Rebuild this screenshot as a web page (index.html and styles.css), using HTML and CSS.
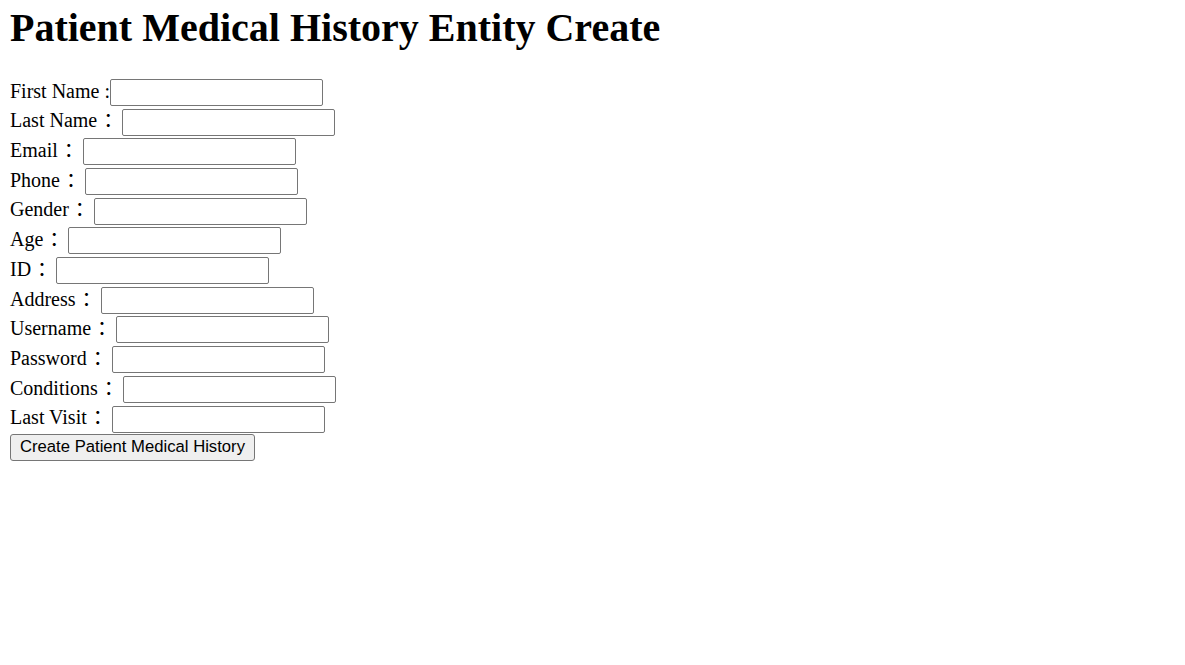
FILE: index.html
```html
<!DOCTYPE html>
<html>
<head>
<meta charset="utf-8">
<title>Patient Medical History Entity Create</title>
<link rel="stylesheet" href="styles.css">
</head>
<body>
<div class="page">
  <h1 class="title">Patient Medical History Entity Create</h1>
  <form class="form">
    <div class="row"><label class="lbl">First Name :</label><input class="field" type="text"></div>
    <div class="row"><label class="lbl">Last Name<span class="colon">：</span> </label><input class="field" type="text"></div>
    <div class="row"><label class="lbl">Email<span class="colon">：</span> </label><input class="field" type="text"></div>
    <div class="row"><label class="lbl">Phone<span class="colon">：</span> </label><input class="field" type="text"></div>
    <div class="row"><label class="lbl">Gender<span class="colon">：</span> </label><input class="field" type="text"></div>
    <div class="row"><label class="lbl">Age<span class="colon">：</span> </label><input class="field" type="text"></div>
    <div class="row"><label class="lbl">ID<span class="colon">：</span> </label><input class="field" type="text"></div>
    <div class="row"><label class="lbl">Address<span class="colon">：</span> </label><input class="field" type="text"></div>
    <div class="row"><label class="lbl">Username<span class="colon">：</span> </label><input class="field" type="text"></div>
    <div class="row"><label class="lbl">Password<span class="colon">：</span> </label><input class="field" type="password"></div>
    <div class="row"><label class="lbl">Conditions<span class="colon">：</span> </label><input class="field" type="text"></div>
    <div class="row"><label class="lbl">Last Visit<span class="colon">：</span> </label><input class="field" type="text"></div>
    <div class="actions"><button class="btn" type="button">Create Patient Medical History</button></div>
  </form>
</div>
</body>
</html>
```

FILE: styles.css
```css
html, body {
  margin: 0;
  padding: 0;
  background: #ffffff;
}

.page {
  padding: 0 10px;
  font-family: "Liberation Serif", "Times New Roman", "Noto Sans CJK SC", serif;
  font-size: 20px;
  color: #000000;
}

.title {
  margin: 5px 0 26.6px;
  font-size: 40px;
  line-height: 46px;
  font-weight: bold;
}

.form {
  margin: 0;
}

.row {
  display: flex;
  align-items: center;
  height: 29.7px;
}

.lbl {
  display: block;
  white-space: pre;
  line-height: 23px;
  padding-bottom: 2.5px;
}

.colon {
  font-family: "Noto Sans CJK SC", sans-serif;
  font-size: 20px;
  line-height: 0;
  padding-left: 6px;
  letter-spacing: -6px;
}

.field {
  box-sizing: border-box;
  width: 213px;
  height: 27px;
  margin: 0;
  padding: 1px 2px;
  border: 1px solid #767676;
  border-radius: 2px;
  background: #ffffff;
  font-family: "Liberation Sans", Arial, sans-serif;
  font-size: 16.67px;
}

.actions {
  display: flex;
}

.btn {
  box-sizing: border-box;
  width: 245px;
  height: 27px;
  margin: 0;
  padding: 0 7px;
  border: 1px solid #767676;
  border-radius: 3px;
  background: #efefef;
  color: #000000;
  font-family: "Liberation Sans", Arial, sans-serif;
  font-size: 16.67px;
  line-height: 1;
}
```
